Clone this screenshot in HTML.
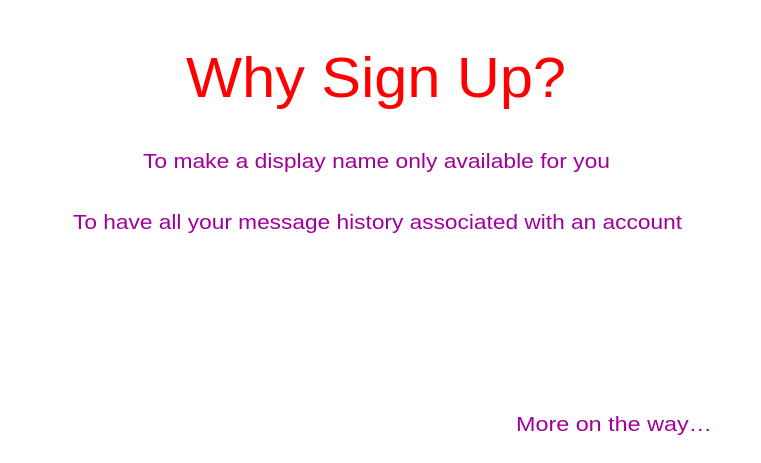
<!DOCTYPE html>
<html><head><meta charset="utf-8"><style>
html,body{margin:0;padding:0;background:#fff;width:761px;height:463px;overflow:hidden}
svg{display:block}
text{font-family:"Liberation Sans",sans-serif}
</style></head><body>
<svg width="761" height="463" xmlns="http://www.w3.org/2000/svg">
<text x="186" y="97" font-size="57" fill="#ff0000" textLength="380" lengthAdjust="spacingAndGlyphs">Why Sign Up?</text>
<text x="143" y="168" font-size="20" fill="#a0009a" textLength="467" lengthAdjust="spacingAndGlyphs">To make a display name only available for you</text>
<text x="73" y="229" font-size="20" fill="#a0009a" textLength="609" lengthAdjust="spacingAndGlyphs">To have all your message history associated with an account</text>
<text x="516" y="431" font-size="20" fill="#a0009a" textLength="196" lengthAdjust="spacingAndGlyphs">More on the way…</text>
</svg>
</body></html>
